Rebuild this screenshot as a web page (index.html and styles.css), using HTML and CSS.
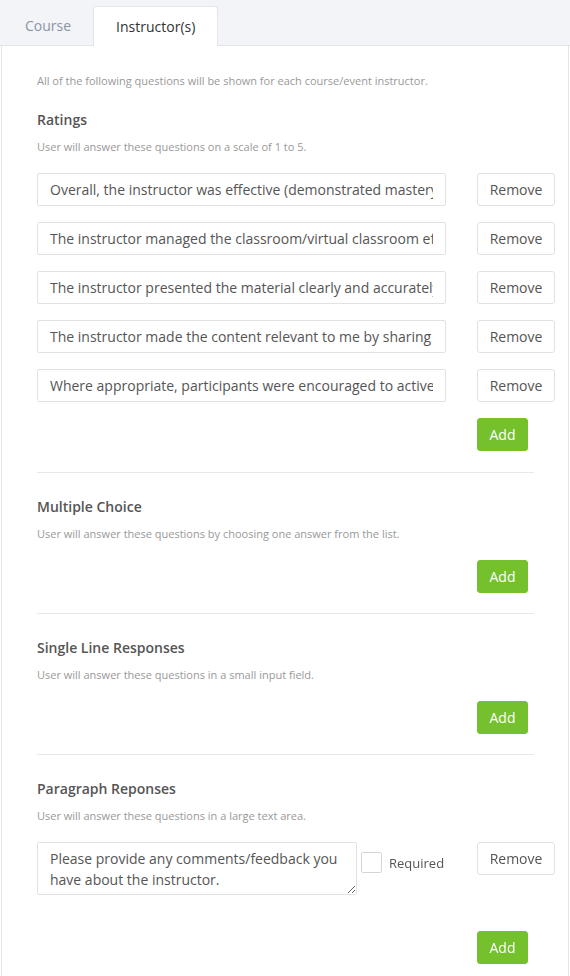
FILE: index.html
```html
<!DOCTYPE html>
<html lang="en">
<head>
  <meta charset="UTF-8" />
  <meta name="viewport" content="width=device-width, initial-scale=1.0"/>
  <title>Evaluation Questions</title>
  <link rel="stylesheet" href="styles.css">
</head>
<body>
  <!-- Tabs -->
  <div class="tabs">
    <a class="tab">Course</a>
    <a class="tab tab-active">Instructor(s)</a>
  </div>

  <div class="panel">
    <p class="intro">All of the following questions will be shown for each course/event instructor.</p>

    <!-- Ratings -->
    <section class="group">
      <h2>Ratings</h2>
      <p class="hint">User will answer these questions on a scale of 1 to 5.</p>
      <div class="q-row">
        <input class="q-input" type="text" value="Overall, the instructor was effective (demonstrated mastery of the subject matter)." />
        <button class="btn">Remove</button>
      </div>
      <div class="q-row">
        <input class="q-input" type="text" value="The instructor managed the classroom/virtual classroom effectively." />
        <button class="btn">Remove</button>
      </div>
      <div class="q-row">
        <input class="q-input" type="text" value="The instructor presented the material clearly and accurately." />
        <button class="btn">Remove</button>
      </div>
      <div class="q-row">
        <input class="q-input" type="text" value="The instructor made the content relevant to me by sharing examples." />
        <button class="btn">Remove</button>
      </div>
      <div class="q-row">
        <input class="q-input" type="text" value="Where appropriate, participants were encouraged to actively participate." />
        <button class="btn">Remove</button>
      </div>
      <div class="q-row">
        <span></span>
        <button class="btn btn-add">Add</button>
      </div>
    </section>

    <!-- Multiple Choice -->
    <section class="group">
      <h2>Multiple Choice</h2>
      <p class="hint">User will answer these questions by choosing one answer from the list.</p>
      <div class="q-row">
        <span></span>
        <button class="btn btn-add">Add</button>
      </div>
    </section>

    <!-- Single Line -->
    <section class="group">
      <h2>Single Line Responses</h2>
      <p class="hint">User will answer these questions in a small input field.</p>
      <div class="q-row">
        <span></span>
        <button class="btn btn-add">Add</button>
      </div>
    </section>

    <!-- Paragraph -->
    <section class="group">
      <h2>Paragraph Reponses</h2>
      <p class="hint">User will answer these questions in a large text area.</p>
      <div class="q-row q-row-para">
        <div class="para-field">
          <textarea class="q-area">Please provide any comments/feedback you have about the instructor.</textarea>
          <label class="check">
            <input type="checkbox" />
            <span>Required</span>
          </label>
        </div>
        <button class="btn">Remove</button>
      </div>
      <div class="q-row">
        <span></span>
        <button class="btn btn-add">Add</button>
      </div>
    </section>
  </div>
</body>
</html>
```

FILE: styles.css
```css
/* Reset & base */
* {
  margin: 0;
  padding: 0;
  box-sizing: border-box;
}
html, body {
  background: #fff;
  font-family: "Open Sans", Arial, sans-serif;
  color: #555;
}

/* Tabs */
.tabs {
  display: flex;
  align-items: flex-end;
  height: 46px;
  padding: 7px 0 0 3px;
  background: #f3f4f8;
  border-bottom: 1px solid #e4e5e9;
}
.tab {
  height: 39px;
  padding: 0 22px;
  display: flex;
  align-items: center;
  font-size: 14px;
  color: #8a93a6;
  cursor: pointer;
}
.tab-active {
  background: #fff;
  color: #333;
  border: 1px solid #e4e5e9;
  border-bottom: none;
  border-radius: 3px 3px 0 0;
  margin-bottom: -1px;
  height: 40px;
}

/* Panel */
.panel {
  margin: 0 1px;
  border: 1px solid #e6e6e6;
  border-top: none;
  padding: 27px 13px 12px 35px;
}
.intro {
  font-size: 11px;
  line-height: 16px;
  color: #999;
  margin-bottom: 21px;
}

/* Question groups */
.group {
  padding-bottom: 21px;
}
.group + .group {
  border-top: 1px solid #e8e8e8;
  margin-right: 21px;
  padding-top: 24px;
  padding-bottom: 20px;
}
.group + .group .q-row {
  margin-right: -21px;
}
.group h2 {
  font-size: 14px;
  line-height: 20px;
  font-weight: 600;
  color: #555;
  margin-bottom: 9px;
}
.hint {
  font-size: 11px;
  line-height: 16px;
  color: #999;
  margin-bottom: 18px;
}

/* Rows */
.q-row {
  display: grid;
  grid-template-columns: 1fr 78px;
  column-gap: 31px;
  align-items: start;
  margin-bottom: 16px;
}
.q-row:last-child {
  margin-bottom: 0;
}
.q-row-para {
  margin-bottom: 36px;
}
.q-input {
  height: 33px;
  width: 100%;
  border: 1px solid #e2e2e2;
  border-radius: 2px;
  padding: 0 12px;
  font-family: inherit;
  font-size: 14px;
  color: #555;
  outline: none;
}
.para-field {
  display: flex;
  align-items: flex-start;
}
.q-area {
  width: 320px;
  height: 53px;
  border: 1px solid #e2e2e2;
  border-radius: 2px;
  padding: 5px 12px;
  font-family: inherit;
  font-size: 14px;
  line-height: 21px;
  color: #555;
  outline: none;
  resize: vertical;
}
.check {
  display: flex;
  align-items: center;
  margin: 10px 0 0 4px;
  font-size: 13px;
  color: #555;
}
.check input {
  appearance: none;
  width: 21px;
  height: 21px;
  border: 1px solid #d5d5d5;
  border-radius: 2px;
  margin-right: 7px;
  background: #fff;
}

/* Buttons */
.btn {
  height: 33px;
  width: 78px;
  background: #fff;
  border: 1px solid #e2e2e2;
  border-radius: 3px;
  font-family: inherit;
  font-size: 14px;
  color: #555;
  cursor: pointer;
}
.btn-add {
  width: 51px;
  background: #74c12d;
  border-color: #74c12d;
  color: #fff;
}
```
